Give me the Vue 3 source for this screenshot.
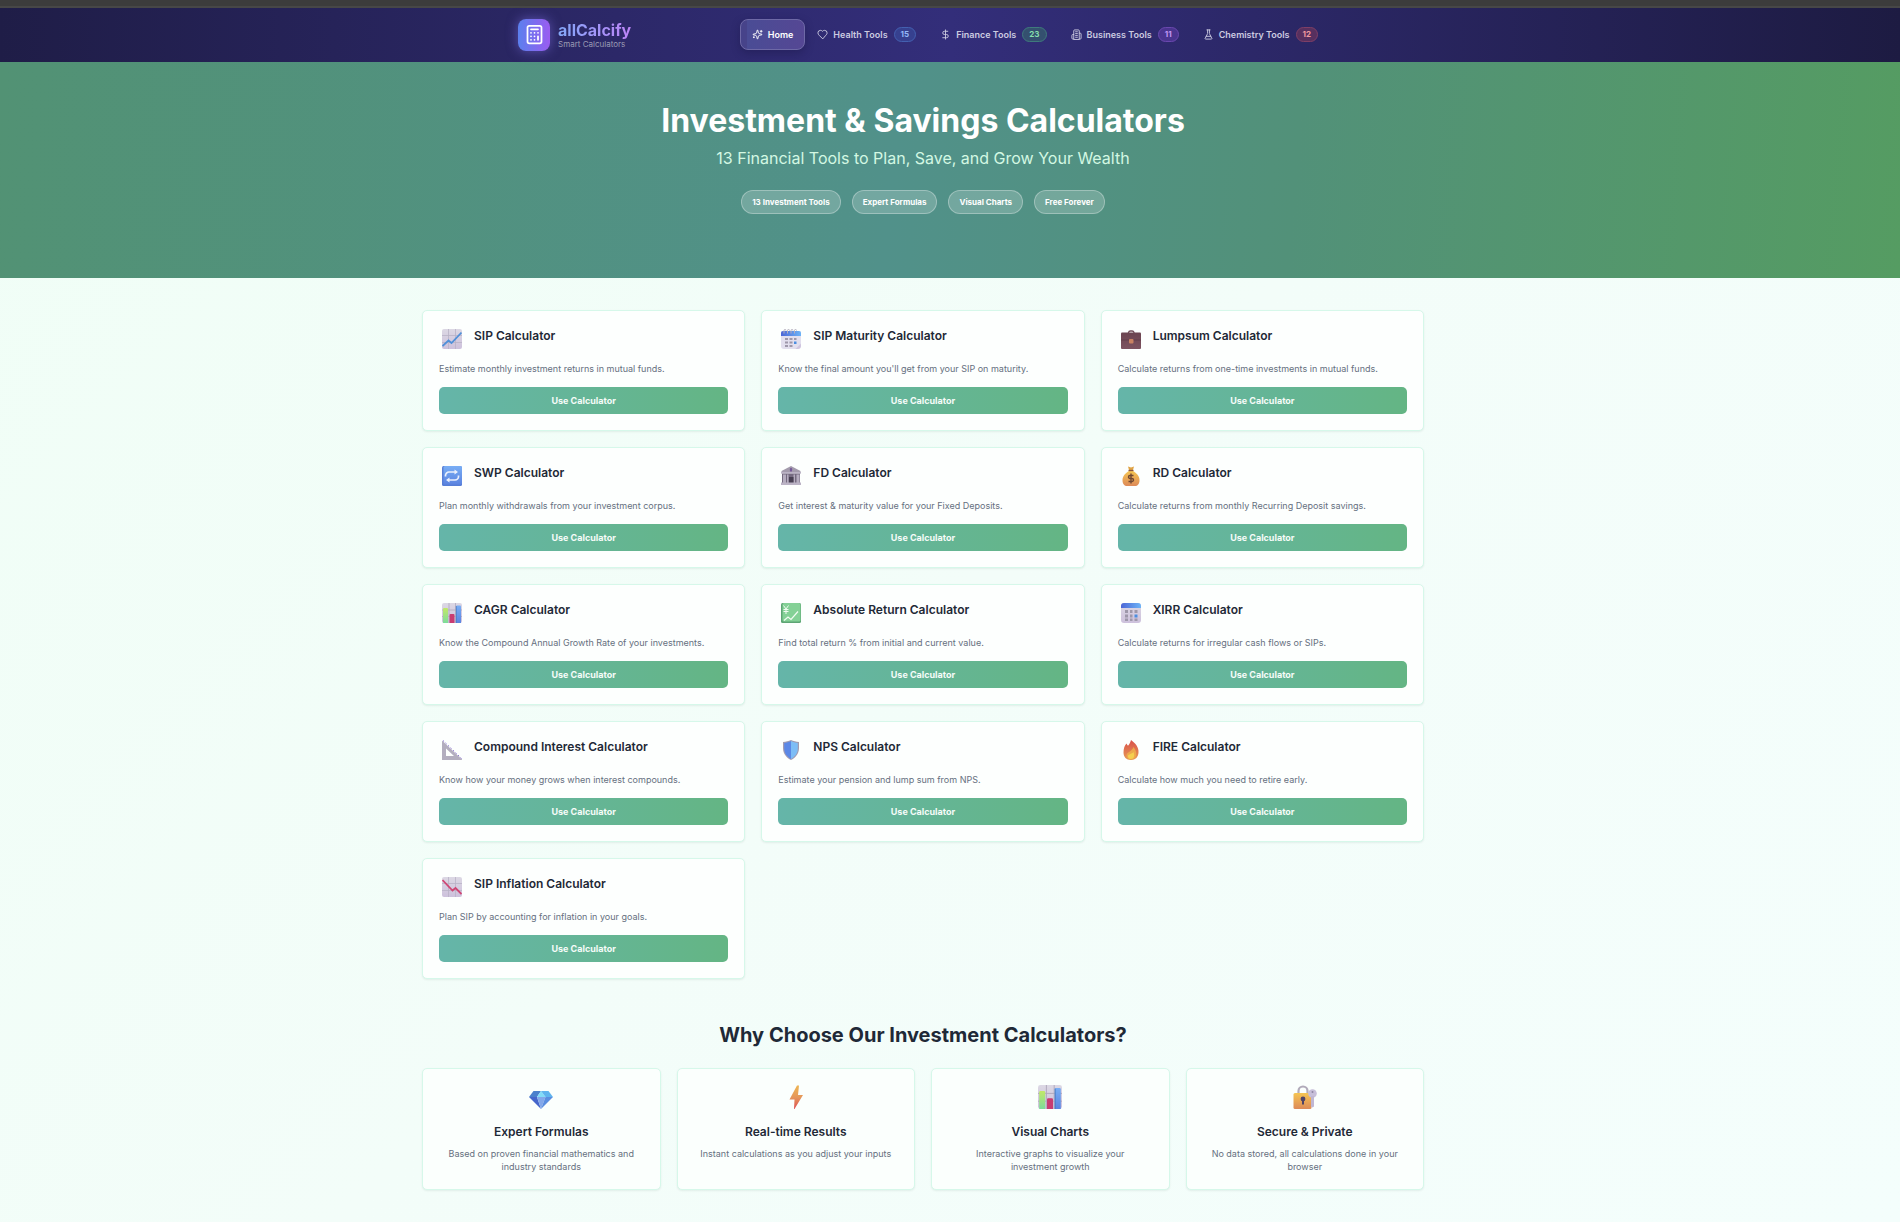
<script setup>
const navItems = [
	{ label: 'Home', icon: 'sparkles', active: true },
	{ label: 'Health Tools', icon: 'heart', count: 15, tone: 'blue' },
	{ label: 'Finance Tools', icon: 'dollar', count: 23, tone: 'green' },
	{ label: 'Business Tools', icon: 'building', count: 11, tone: 'purple' },
	{ label: 'Chemistry Tools', icon: 'flask', count: 12, tone: 'red' }
]

const tags = ['13 Investment Tools', 'Expert Formulas', 'Visual Charts', 'Free Forever']

const calculators = [
	{ name: 'SIP Calculator', icon: 'chart-up', text: 'Estimate monthly investment returns in mutual funds.' },
	{ name: 'SIP Maturity Calculator', icon: 'calendar-spiral', text: "Know the final amount you'll get from your SIP on maturity." },
	{ name: 'Lumpsum Calculator', icon: 'briefcase', text: 'Calculate returns from one-time investments in mutual funds.' },
	{ name: 'SWP Calculator', icon: 'repeat', text: 'Plan monthly withdrawals from your investment corpus.' },
	{ name: 'FD Calculator', icon: 'bank', text: 'Get interest & maturity value for your Fixed Deposits.' },
	{ name: 'RD Calculator', icon: 'money-bag', text: 'Calculate returns from monthly Recurring Deposit savings.' },
	{ name: 'CAGR Calculator', icon: 'bars', text: 'Know the Compound Annual Growth Rate of your investments.' },
	{ name: 'Absolute Return Calculator', icon: 'yen-chart', text: 'Find total return % from initial and current value.' },
	{ name: 'XIRR Calculator', icon: 'calendar', text: 'Calculate returns for irregular cash flows or SIPs.' },
	{ name: 'Compound Interest Calculator', icon: 'ruler', text: 'Know how your money grows when interest compounds.' },
	{ name: 'NPS Calculator', icon: 'shield', text: 'Estimate your pension and lump sum from NPS.' },
	{ name: 'FIRE Calculator', icon: 'fire', text: 'Calculate how much you need to retire early.' },
	{ name: 'SIP Inflation Calculator', icon: 'chart-down', text: 'Plan SIP by accounting for inflation in your goals.' }
]

const features = [
	{ name: 'Expert Formulas', icon: 'gem', text: 'Based on proven financial mathematics and industry standards' },
	{ name: 'Real-time Results', icon: 'bolt', text: 'Instant calculations as you adjust your inputs' },
	{ name: 'Visual Charts', icon: 'bars', text: 'Interactive graphs to visualize your investment growth' },
	{ name: 'Secure & Private', icon: 'lock', text: 'No data stored, all calculations done in your browser' }
]
</script>

<template>
	<!-- Icon sprite -->
	<svg class="sprite" aria-hidden="true">
		<defs>
			<linearGradient id="g-paper" x1="0" y1="0" x2="0" y2="1">
				<stop offset="0" stop-color="#dcd8e4" />
				<stop offset="1" stop-color="#cdc1dc" />
			</linearGradient>
			<linearGradient id="g-blue" x1="0" y1="0" x2="0" y2="1">
				<stop offset="0" stop-color="#78aef5" />
				<stop offset="1" stop-color="#5b84e0" />
			</linearGradient>
			<linearGradient id="g-blue-h" x1="0" y1="0" x2="1" y2="0">
				<stop offset="0" stop-color="#4c66d6" />
				<stop offset="1" stop-color="#6db4f7" />
			</linearGradient>
			<linearGradient id="g-lime" x1="0" y1="0" x2="0" y2="1">
				<stop offset="0" stop-color="#c2e868" />
				<stop offset="1" stop-color="#7cdc9c" />
			</linearGradient>
			<linearGradient id="g-gold" x1="0" y1="0" x2="0" y2="1">
				<stop offset="0" stop-color="#f5c552" />
				<stop offset="1" stop-color="#dd8a58" />
			</linearGradient>
			<linearGradient id="g-bolt" x1="0" y1="0" x2="0" y2="1">
				<stop offset="0" stop-color="#eeb553" />
				<stop offset="0.5" stop-color="#e5975a" />
				<stop offset="1" stop-color="#dd4f54" />
			</linearGradient>
			<linearGradient id="g-fire" x1="0" y1="0" x2="0" y2="1">
				<stop offset="0" stop-color="#d9504a" />
				<stop offset="1" stop-color="#e79a55" />
			</linearGradient>
			<linearGradient id="g-case" x1="0" y1="0" x2="0" y2="1">
				<stop offset="0" stop-color="#6b4450" />
				<stop offset="1" stop-color="#7d5360" />
			</linearGradient>
		</defs>

		<symbol id="sparkles" viewBox="0 0 24 24">
			<path d="M9.937 15.5A2 2 0 0 0 8.500 14.063l-6.135-1.582a.5.5 0 0 1 0-.962L8.500 9.936A2 2 0 0 0 9.937 8.500l1.582-6.135a.5.5 0 0 1 .963 0L14.063 8.500A2 2 0 0 0 15.500 9.937l6.135 1.581a.5.5 0 0 1 0 .964L15.500 14.063a2 2 0 0 0-1.437 1.437l-1.582 6.135a.5.5 0 0 1-.963 0z" />
			<path d="M20 3v4M22 5h-4M4 17v2M5 18H3" />
		</symbol>
		<symbol id="heart" viewBox="0 0 24 24">
			<path d="M19 14c1.500-1.500 3-3.200 3-5.500A5.500 5.500 0 0 0 16.500 3c-1.800 0-3 .5-4.500 2-1.500-1.500-2.700-2-4.500-2A5.500 5.500 0 0 0 2 8.500c0 2.300 1.500 4 3 5.500l7 7z" />
		</symbol>
		<symbol id="dollar" viewBox="0 0 24 24">
			<path d="M12 2v20M17 5H9.500a3.500 3.500 0 0 0 0 7h5a3.500 3.500 0 0 1 0 7H6" />
		</symbol>
		<symbol id="building" viewBox="0 0 24 24">
			<path d="M6 22V4a2 2 0 0 1 2-2h8a2 2 0 0 1 2 2v18z" />
			<path d="M6 12H4a2 2 0 0 0-2 2v6a2 2 0 0 0 2 2h2M18 9h2a2 2 0 0 1 2 2v9a2 2 0 0 1-2 2h-2M10 6h4M10 10h4M10 14h4M10 18h4" />
		</symbol>
		<symbol id="flask" viewBox="0 0 24 24">
			<path d="M10 2v7.500a2 2 0 0 1-.2.900L4.700 20.500a1 1 0 0 0 .9 1.500h12.800a1 1 0 0 0 .9-1.500l-5.100-10.100a2 2 0 0 1-.2-.900V2M8.500 2h7M7 16h10" />
		</symbol>
		<symbol id="calculator" viewBox="0 0 24 24">
			<rect x="4" y="2" width="16" height="20" rx="2" />
			<path d="M8 6h8M8 10h.01M12 10h.01M16 10h.01M8 14h.01M12 14h.01M16 14v4M8 18h.01M12 18h.01" />
		</symbol>

		<symbol id="chart-up" viewBox="0 0 20 20">
			<rect width="20" height="20" rx="2" fill="url(#g-paper)" />
			<path d="M6.500 0v20M13.500 0v20M0 6.500h20M0 13.500h20" stroke="#b9b2c6" stroke-width="0.800" />
			<path d="M0.500 17 6.500 11.500 9.500 14 19.500 3.500" fill="none" stroke="#5090d8" stroke-width="1.800" />
		</symbol>
		<symbol id="chart-down" viewBox="0 0 20 20">
			<rect width="20" height="20" rx="2" fill="url(#g-paper)" />
			<path d="M6.500 0v20M13.500 0v20M0 6.500h20M0 13.500h20" stroke="#b9b2c6" stroke-width="0.800" />
			<path d="M0.500 3 10.500 13.500 13.500 11 19.500 17" fill="none" stroke="#cf4674" stroke-width="1.800" />
		</symbol>
		<symbol id="bars" viewBox="0 0 20 20">
			<rect width="20" height="20" rx="2" fill="url(#g-paper)" />
			<path d="M7 0v20M13.500 0v20M0 7h20M0 13.500h20" stroke="#b0a9bd" stroke-width="0.800" />
			<path d="M1 20V6a1 1 0 0 1 1-1h3a1 1 0 0 1 1 1v14z" fill="url(#g-lime)" />
			<path d="M7.500 20v-8a1 1 0 0 1 1-1h3a1 1 0 0 1 1 1v8z" fill="#c83c72" />
			<path d="M14 20V3.500a1 1 0 0 1 1-1h3a1 1 0 0 1 1 1V20z" fill="url(#g-blue)" />
			<path d="M14.300 20V3" stroke="#4577be" stroke-width="0.700" />
		</symbol>
		<symbol id="calendar-spiral" viewBox="0 0 20 20">
			<path d="M0 2.500h20V15l-4.500 5H3a3 3 0 0 1-3-3z" fill="#e2dfee" />
			<path d="M20 14.500V17a3 3 0 0 1-3 3h-2.500z" fill="#cfc5df" />
			<path d="M0 7V4a2 2 0 0 1 2-2h16a2 2 0 0 1 2 2v3z" fill="url(#g-blue-h)" />
			<path d="M3 4.500V1.500a1 1 0 0 1 2 0M6.500 4.500V1.500a1 1 0 0 1 2 0M10 4.500V1.500a1 1 0 0 1 2 0M13.500 4.500V1.500a1 1 0 0 1 2 0" fill="none" stroke="#b5afbd" stroke-width="1" />
			<path d="M4 9h3v2H4zM8.500 9h3v2h-3zM13 9h2.500v2H13zM4 12.500h3v2H4zM8.500 12.500h3v2h-3zM4 16h3v2H4zM8.500 16h3v2h-3z" fill="#9e98aa" />
			<path d="M13 12.500h2.500v2.500H13z" fill="#4b8ee0" />
		</symbol>
		<symbol id="calendar" viewBox="0 0 20 20">
			<rect width="20" height="20" rx="3" fill="url(#g-paper)" />
			<path d="M0 5V3a3 3 0 0 1 3-3h14a3 3 0 0 1 3 3v2z" fill="url(#g-blue-h)" />
			<path d="M4 7h3v3H4zM9 7h2.500v3H9zM13.500 7h3v3h-3zM4 11.500h3v3H4zM9 11.500h2.500v3H9zM4 15.500h3v2.500H4zM9 15.500h2.500v2.500H9zM13.500 15.500h3v2.500h-3z" fill="#9e98aa" />
			<path d="M13.500 11.500h3v3h-3z" fill="#4b8ee0" />
		</symbol>
		<symbol id="briefcase" viewBox="0 0 20 20">
			<path d="M7.500 4.500V3.500a2 2 0 0 1 2-1.500h1.500a2 2 0 0 1 2 1.500v1" fill="none" stroke="#704c58" stroke-width="1.300" />
			<rect y="3.500" width="20" height="16.500" rx="1" fill="url(#g-case)" />
			<path d="M0 11h20" stroke="#573843" stroke-width="0.600" />
			<rect x="8" y="10" width="4.500" height="4.500" rx="1" fill="#c98262" />
		</symbol>
		<symbol id="repeat" viewBox="0 0 20 20">
			<rect width="20" height="20" rx="1.500" fill="#567ed6" />
			<rect x="1.500" width="18.500" height="18.500" rx="1.500" fill="url(#g-blue)" />
			<path d="M3.500 10.500V9.500a3.500 3.500 0 0 1 3.500-3.500h7M16.500 9.500v1a3.500 3.500 0 0 1-3.500 3.500H6" fill="none" stroke="#eaf0fc" stroke-width="1.700" />
			<path d="M12.500 3.500v5l3.500-2.500zM7.500 11.500v5L4 14z" fill="#eaf0fc" />
		</symbol>
		<symbol id="bank" viewBox="0 0 20 20">
			<path d="M10 0 19.500 5v2.500h-19V5z" fill="#a39bac" />
			<path d="M1 7.500h18V17H1z" fill="#756b80" />
			<path d="M2 8.500h3V17H2zM6 8.500h1.500V17H6zM12.500 8.500H14V17h-1.500zM15.500 8.500h3V17h-3z" fill="#b5adbf" />
			<path d="M8 11h4.500v6H8z" fill="#484053" />
			<path d="M0 16.500h20V19H0zM0 6h20v1.500H0z" fill="#bbb3c5" />
			<ellipse cx="10" cy="3.800" rx="1.200" ry="2" fill="#745898" />
		</symbol>
		<symbol id="money-bag" viewBox="0 0 20 20">
			<path d="M7 0.500 10 1.500 13 0.500 12 4H8z" fill="#e0a445" />
			<path d="M8 5h4c3.500 2 6.500 5 6.500 9 0 4-2 6-4.500 6H6c-2.500 0-4.500-2-4.500-6 0-4 3-7 6.500-9z" fill="url(#g-gold)" />
			<path d="M7.500 4.500h5" stroke="#8a543f" stroke-width="1.300" />
			<path d="M10 7.500v10M12.500 9.500h-3.500a1.500 1.500 0 0 0 0 3h2a1.500 1.500 0 0 1 0 3H7.500" fill="none" stroke="#704832" stroke-width="1.400" />
		</symbol>
		<symbol id="yen-chart" viewBox="0 0 20 20">
			<rect width="20" height="20" rx="1.500" fill="#5da574" />
			<rect x="1.500" width="18" height="18.500" rx="1.500" fill="#84d196" />
			<path d="M3 17.500 7 14l3 2.500L17 8.500" fill="none" stroke="#f1fbf2" stroke-width="1.200" />
			<path d="M2.500 2.500 5 6 7.500 2.500M5 6v5M2.500 6.500h5M2.500 8.500h5" fill="none" stroke="#f1fbf2" stroke-width="1" />
		</symbol>
		<symbol id="ruler" viewBox="0 0 20 20">
			<path d="M0 0.500 20 19.500V20H0zM4 8.500V16h8z" fill="#b3aebf" fill-rule="evenodd" />
			<path d="M1 0.500 19.500 18.500" stroke="#8469ce" stroke-width="1" stroke-dasharray="1.500 2" />
		</symbol>
		<symbol id="shield" viewBox="0 0 20 20">
			<path d="M10 0c2.500 1 5 1.700 8 2v6c0 6-4 10-8 12C6 18 2 14 2 8V2c3-.3 5.500-1 8-2z" fill="#a39cb0" />
			<path d="M10 1C8 2 5.500 2.700 3.200 3v5.500c0 5 3.300 8.500 6.800 10.500z" fill="#5c88e6" />
			<path d="M10 1c2 1 4.500 1.700 6.800 2v5.500c0 5-3.300 8.500-6.800 10.500z" fill="#7dbdf6" />
		</symbol>
		<symbol id="fire" viewBox="0 0 20 20">
			<path d="M10 0c4 3 8 7 7.500 12.500C17.300 17 14.500 20 10 20c-4.800 0-7.500-3-7.500-7.500 0-4 1-7 3-9 .5 1 .8 1.800 1.500 2.300C8.500 4 9.500 2 10 0z" fill="url(#g-fire)" />
			<path d="M12.500 7c3 4 3 6.500 2.500 9-.7 2.500-2.500 3.500-5 3.500-2.700 0-4.500-1.500-4.500-4 0-3.500 5.500-4 7-8.500z" fill="#eda84c" />
			<path d="M12.500 12c1.500 4 .5 7-2.500 7-2.500 0-3-1.500-3-3 .5-2 4-2 5.500-4z" fill="#f5cf50" />
		</symbol>
		<symbol id="gem" viewBox="0 0 24 24">
			<path d="M4.500 6H12L8 12H0z" fill="#4a80cc" />
			<path d="M12 6 16.500 12H8z" fill="#82dcf8" />
			<path d="M12 6h7.500l4.500 6h-7.500z" fill="#5fb4ee" />
			<path d="M0 12h8l4 12z" fill="#4566cb" />
			<path d="M8 12h8.500L12 24z" fill="#83a8ea" />
			<path d="M16.500 12H24L12 24z" fill="#5a8ee0" />
		</symbol>
		<symbol id="bolt" viewBox="0 0 24 24">
			<path d="M13 0.500h2L14 10h5L10.500 24H10l.5-9.500h-5z" fill="url(#g-bolt)" />
		</symbol>
		<symbol id="lock" viewBox="0 0 24 24">
			<path d="M5.500 9V6a4.500 4.500 0 0 1 9 0v3" fill="none" stroke="#b1abba" stroke-width="2.200" />
			<rect x="0.500" y="8" width="18" height="16" rx="1.500" fill="url(#g-gold)" />
			<circle cx="19.500" cy="8.500" r="4.300" fill="#c7bfd9" />
			<path d="M18 11h3v10.500l-1.500 1-1.500-1z" fill="#c0b7d3" />
			<circle cx="19.500" cy="7" r="1" fill="#8f86a3" />
			<circle cx="10" cy="14" r="2.400" fill="#4f4366" />
			<path d="M9 15h2v4.500H9z" fill="#4f4366" />
		</symbol>
	</svg>

	<div class="page">
		<div class="strip"></div>

		<header class="header">
			<div class="header-inner">
				<a href="#" class="brand">
					<span class="brand-mark">
						<svg class="line-icon"><use href="#calculator" /></svg>
					</span>
					<span class="brand-text">
						<strong>allCalcify</strong>
						<small>Smart Calculators</small>
					</span>
				</a>

				<nav class="nav">
					<a
						v-for="item in navItems"
						:key="item.label"
						href="#"
						class="nav-link"
						:class="{ active: item.active }"
					>
						<svg class="line-icon"><use :href="'#' + item.icon" /></svg>
						<span>{{ item.label }}</span>
						<span v-if="item.count" class="count" :class="item.tone">{{ item.count }}</span>
					</a>
				</nav>
			</div>
		</header>

		<section class="hero">
			<h1>Investment &amp; Savings Calculators</h1>
			<p>13 Financial Tools to Plan, Save, and Grow Your Wealth</p>
			<ul class="tags">
				<li v-for="tag in tags" :key="tag">{{ tag }}</li>
			</ul>
		</section>

		<main class="main">
			<div class="calc-grid">
				<article v-for="calc in calculators" :key="calc.name" class="card">
					<div class="card-head">
						<svg class="emoji"><use :href="'#' + calc.icon" /></svg>
						<h3>{{ calc.name }}</h3>
					</div>
					<p>{{ calc.text }}</p>
					<a href="#" class="use-btn">Use Calculator</a>
				</article>
			</div>

			<h2>Why Choose Our Investment Calculators?</h2>

			<div class="feature-grid">
				<article v-for="feature in features" :key="feature.name" class="card feature">
					<svg class="emoji"><use :href="'#' + feature.icon" /></svg>
					<h3>{{ feature.name }}</h3>
					<p>{{ feature.text }}</p>
				</article>
			</div>
		</main>
	</div>
</template>

<style>
body {
	margin: 0;
}
</style>

<style scoped>
.page {
	min-height: 100vh;
	box-sizing: border-box;
	font-family: Inter, "Liberation Sans", sans-serif;
	color: #1f2937;
	background: linear-gradient(135deg, #f0fef6 0%, #f3fdf9 50%, #f4fefc 100%);
}

.page *,
.page *::before {
	box-sizing: border-box;
}

.page a {
	text-decoration: none;
}

.sprite {
	position: absolute;
	width: 0;
	height: 0;
}

.strip {
	height: 8px;
	background: #3c3c3c;
	border-bottom: 2px solid #474747;
}

.line-icon {
	fill: none;
	stroke: currentColor;
	stroke-width: 2;
	stroke-linecap: round;
	stroke-linejoin: round;
}

/* The content column sits left of centre by the width of the right gutter */
.header,
.hero,
.main {
	padding-right: 54px;
}

.header {
	height: 54px;
	padding-right: 52px;
	padding-bottom: 1px;
	background: linear-gradient(90deg, #1f1d47 0%, #332e7a 50%, #1d1b42 100%);
}

.header-inner {
	display: flex;
	align-items: center;
	justify-content: space-between;
	max-width: 812px;
	height: 100%;
	margin: 0 auto;
}

.brand {
	display: flex;
	align-items: center;
	gap: 8px;
}

.brand-mark {
	display: flex;
	align-items: center;
	justify-content: center;
	width: 32px;
	height: 32px;
	border-radius: 8px;
	color: #ffffff;
	background: linear-gradient(90deg, #5b80ee, #9a5cf0);
	box-shadow: 0 0 12px rgba(139, 124, 246, 0.5);
}

.brand-mark .line-icon {
	width: 21px;
	height: 21px;
}

.brand-text {
	display: flex;
	flex-direction: column;
}

.brand-text strong {
	font-size: 16px;
	line-height: 18px;
	font-weight: 700;
	color: transparent;
	background: linear-gradient(90deg, #83a8f8, #bd84f8);
	background-clip: text;
}

.brand-text small {
	font-size: 8px;
	line-height: 10px;
	color: #9b9bb4;
}

.nav {
	display: flex;
	align-items: center;
}

.nav-link {
	display: flex;
	align-items: center;
	gap: 5px;
	height: 31px;
	padding: 0 11px;
	border: 1px solid transparent;
	border-radius: 8px;
	font-size: 9px;
	font-weight: 600;
	color: #cccbe0;
}

.nav-link .line-icon {
	width: 11px;
	height: 11px;
}

.nav-link.active {
	color: #ffffff;
	border-color: #6e69a6;
	background: linear-gradient(90deg, #47438a 0 6px, #4a4c95 6px, #554794 100%);
	box-shadow: 0 3px 8px rgba(20, 16, 60, 0.35);
}

.count {
	margin-left: 1px;
	padding: 0 6px;
	border: 1px solid;
	border-radius: 8px;
	font-size: 8px;
	line-height: 13px;
	font-weight: 700;
}

.count.blue {
	color: #93b8f8;
	background: #36408f;
	border-color: #4460b0;
}

.count.green {
	color: #86dfae;
	background: #34506f;
	border-color: #3f7a7c;
}

.count.purple {
	color: #c298f5;
	background: #4a348f;
	border-color: #6a48ae;
}

.count.red {
	color: #f09a9f;
	background: #57305f;
	border-color: #7f3f66;
}

.hero {
	display: flex;
	flex-direction: column;
	align-items: center;
	height: 216px;
	padding-top: 39px;
	text-align: center;
	background: linear-gradient(95deg, #529274 0%, #51918a 47%, #529179 68%, #559c62 100%);
}

.hero h1 {
	margin: 0;
	font-size: 32px;
	line-height: 40px;
	font-weight: 700;
	color: #ffffff;
}

.hero p {
	margin: 5px 0 0;
	font-size: 16px;
	line-height: 24px;
	color: #d3f8e3;
}

.tags {
	display: flex;
	gap: 11px;
	margin: 20px 0 0;
	padding: 0;
	list-style: none;
}

.tags li {
	padding: 0 10px;
	border: 1px solid rgba(255, 255, 255, 0.3);
	border-radius: 12px;
	font-size: 8px;
	line-height: 22px;
	font-weight: 700;
	color: #ffffff;
	background: rgba(255, 255, 255, 0.2);
}

.main {
	padding-top: 32px;
	padding-bottom: 32px;
}

.calc-grid,
.feature-grid {
	display: grid;
	gap: 16px;
	max-width: 1002px;
	margin: 0 auto;
}

.calc-grid {
	grid-template-columns: repeat(3, 1fr);
}

.feature-grid {
	grid-template-columns: repeat(4, 1fr);
}

.card {
	padding: 16px;
	border: 1px solid #d6f8ea;
	border-radius: 5px;
	background: #fdfffe;
	box-shadow: 0 1px 2px rgba(0, 60, 40, 0.08);
}

.card h3 {
	margin: 0;
	font-size: 12px;
	line-height: 18px;
	font-weight: 600;
}

.card p {
	margin: 0;
	font-size: 9px;
	color: #667080;
}

.card-head {
	display: flex;
	gap: 8px;
}

.card-head .emoji {
	width: 20px;
	height: 20px;
	margin: 2px 4px 2px 3px;
}

.card-head + p {
	margin: 10px 0;
	line-height: 16px;
}

.use-btn {
	display: block;
	border-radius: 5px;
	font-size: 9px;
	line-height: 27px;
	font-weight: 700;
	text-align: center;
	color: #f6fcf9;
	background: linear-gradient(90deg, #65b5a9, #64b584);
}

.main h2 {
	margin: 43px 0 20px;
	font-size: 20px;
	line-height: 26px;
	font-weight: 700;
	text-align: center;
}

.feature {
	text-align: center;
	background: #fbfffd;
}

.feature .emoji {
	display: block;
	width: 24px;
	height: 24px;
	margin: 0 auto 14px;
}

.feature p {
	margin-top: 6px;
	padding: 0 4px;
	line-height: 13px;
}
</style>
